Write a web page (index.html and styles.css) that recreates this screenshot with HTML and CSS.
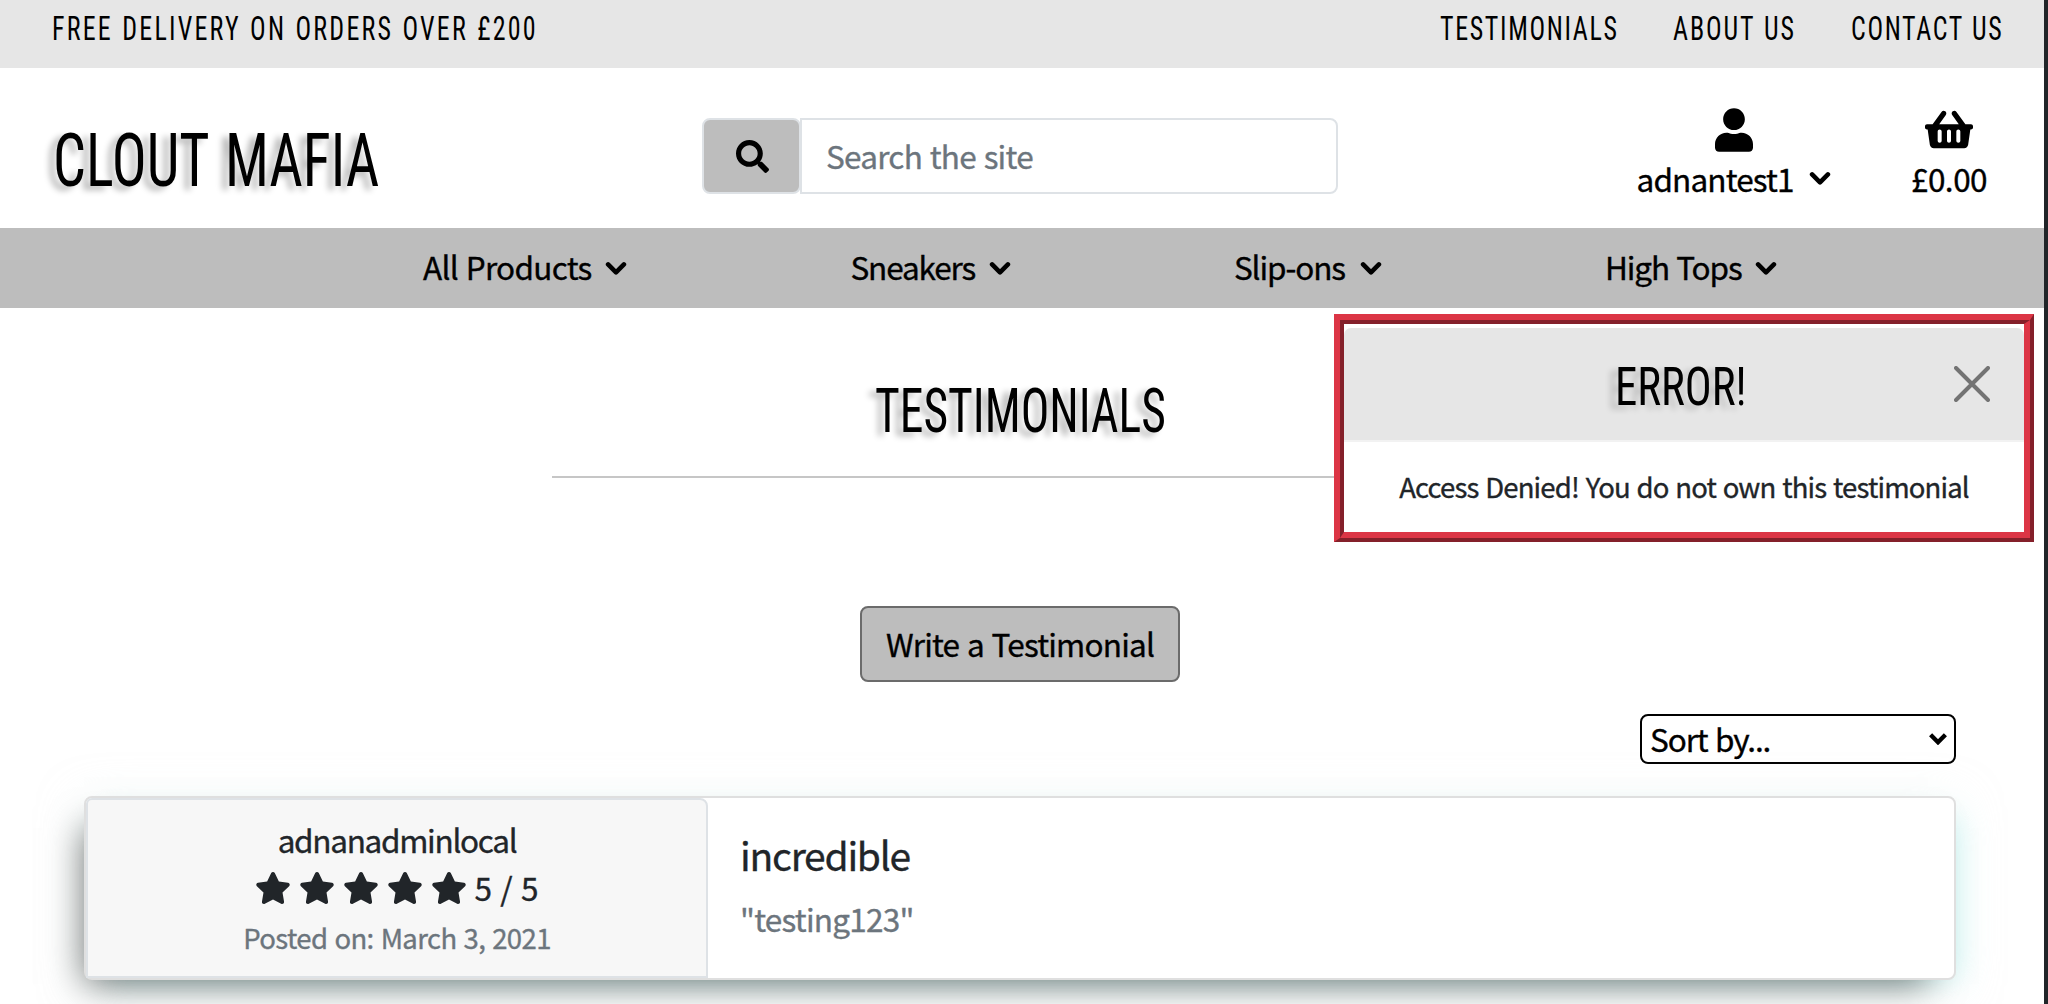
FILE: index.html
```html
<!DOCTYPE html>
<html lang="en">
<head>
<meta charset="utf-8">
<title>Clout Mafia - Testimonials</title>
<link rel="stylesheet" href="styles.css">
</head>
<body>
<svg class="defs" width="0" height="0">
  <symbol id="chevron" viewBox="0 0 22 25"><path d="M3.1 8.4l7.9 7.9 7.9-7.9" fill="none" stroke="currentColor" stroke-width="4.6" stroke-linecap="round" stroke-linejoin="round"/></symbol>
  <symbol id="star" viewBox="0 0 576 512"><path d="M259.3 17.8L194 150.2 47.9 171.5c-26.2 3.8-36.7 36.1-17.7 54.6l105.7 103-25 145.5c-4.5 26.3 23.2 46 46.4 33.7L288 439.6l130.7 68.7c23.2 12.2 50.9-7.4 46.4-33.7l-25-145.5 105.7-103c19-18.5 8.5-50.8-17.7-54.6L382 150.2 316.7 17.8c-11.7-23.6-45.6-23.9-57.4 0z"/></symbol>
</svg>
<div class="page">
  <div class="topbar">
    <div><span class="cond promo">FREE DELIVERY ON ORDERS OVER £200</span></div>
    <a><span class="cond">TESTIMONIALS</span></a>
    <a><span class="cond about">ABOUT US</span></a>
    <a><span class="cond">CONTACT US</span></a>
  </div>
  <header class="header">
    <div class="brand"><span class="cond">CLOUT MAFIA</span></div>
    <form class="search">
      <button class="search-btn" type="button" aria-label="Search"><svg viewBox="0 0 512 512"><path d="M505 442.7L405.3 343c-4.5-4.5-10.6-7-17-7H372c27.6-35.3 44-79.7 44-128C416 93.1 322.9 0 208 0S0 93.1 0 208s93.1 208 208 208c48.3 0 92.7-16.4 128-44v16.3c0 6.4 2.5 12.5 7 17l99.7 99.7c9.4 9.4 24.6 9.4 33.9 0l28.3-28.3c9.4-9.4 9.4-24.6.1-34zM208 336c-70.7 0-128-57.2-128-128 0-70.7 57.2-128 128-128 70.7 0 128 57.2 128 128 0 70.7-57.2 128-128 128z"/></svg></button>
      <input class="search-input" type="text" placeholder="Search the site">
    </form>
    <a class="account">
      <svg class="user-icon" viewBox="0 0 448 512"><path d="M224 256c70.7 0 128-57.3 128-128S294.7 0 224 0 96 57.3 96 128s57.3 128 128 128zm89.6 32h-16.7c-22.2 10.2-46.9 16-72.9 16s-50.6-5.8-72.9-16h-16.7C60.2 288 0 348.2 0 422.4V464c0 26.5 21.5 48 48 48h352c26.5 0 48-21.5 48-48v-41.6c0-74.2-60.2-134.4-134.4-134.4z"/></svg>
      <span class="account-name">adnantest1<svg class="chevron"><use href="#chevron"/></svg></span>
    </a>
    <a class="basket">
      <svg class="basket-icon" viewBox="0 0 576 512"><path d="M576 216v16c0 13.255-10.745 24-24 24h-8l-26.113 182.788C514.509 462.435 494.257 480 470.37 480H105.63c-23.887 0-44.139-17.565-47.518-41.212L32 256h-8c-13.255 0-24-10.745-24-24v-16c0-13.255 10.745-24 24-24h67.341l106.78-146.821c10.395-14.292 30.407-17.453 44.701-7.058 14.293 10.395 17.453 30.408 7.058 44.701L170.477 192h235.046L326.12 82.821c-10.395-14.292-7.234-34.306 7.059-44.701 14.291-10.395 34.306-7.235 44.701 7.058L484.659 192H552c13.255 0 24 10.745 24 24zM312 392V280c0-13.255-10.745-24-24-24s-24 10.745-24 24v112c0 13.255 10.745 24 24 24s24-10.745 24-24zm112 0V280c0-13.255-10.745-24-24-24s-24 10.745-24 24v112c0 13.255 10.745 24 24 24s24-10.745 24-24zm-224 0V280c0-13.255-10.745-24-24-24s-24 10.745-24 24v112c0 13.255 10.745 24 24 24s24-10.745 24-24z"/></svg>
      <span>£0.00</span>
    </a>
  </header>
  <nav class="nav">
    <a class="n1"><span>All Products</span><svg class="chevron"><use href="#chevron"/></svg></a>
    <a class="n2"><span>Sneakers</span><svg class="chevron"><use href="#chevron"/></svg></a>
    <a class="n3"><span>Slip-ons</span><svg class="chevron"><use href="#chevron"/></svg></a>
    <a class="n4"><span>High Tops</span><svg class="chevron"><use href="#chevron"/></svg></a>
  </nav>
  <main class="main">
    <h2 class="title"><span class="cond">TESTIMONIALS</span></h2>
    <hr class="rule">
    <a class="write">Write a Testimonial</a>
    <div class="sort"><span>Sort by...</span><svg viewBox="0 0 18 12"><path d="M1.6 1.8L9 9.2l7.4-7.4"/></svg></div>
    <article class="card">
      <div class="author">
        <div class="name">adnanadminlocal</div>
        <div class="stars">
          <svg><use href="#star"/></svg><svg><use href="#star"/></svg><svg><use href="#star"/></svg><svg><use href="#star"/></svg><svg><use href="#star"/></svg>
          <span>5 / 5</span>
        </div>
        <div class="date">Posted on: March 3, 2021</div>
      </div>
      <div class="review">
        <h4>incredible</h4>
        <p>"testing123"</p>
      </div>
    </article>
  </main>
  <div class="toast">
    <div class="toast-inner">
      <div class="toast-head">
        <span class="cond">ERROR!</span>
        <svg class="close" viewBox="0 0 36 36"><path d="M2 2l32 32M34 2L2 34"/></svg>
      </div>
      <div class="toast-body">Access Denied! You do not own this testimonial</div>
    </div>
  </div>
</div>
</body>
</html>
```
FILE: styles.css
```css
* { box-sizing: border-box; }
html { background: #212529; }
body {
  margin: 0;
  background: #212529;
  color: #212529;
  font: 31.5px/48px "Noto Sans CJK JP", "Noto Sans", sans-serif;
  letter-spacing: -0.75px;
  word-spacing: 1.4px;
  -webkit-text-stroke: 0.35px;
  overflow: hidden;
}
svg { display: block; flex: none; fill: currentColor; }
.defs { position: absolute; }
.page {
  position: relative;
  width: 2044px;
  height: 1004px;
  overflow: hidden;
  background: #fff;
}
.topbar, .brand, .title, .toast-head { font-family: Roboto, sans-serif; }
.cond {
  display: inline-block;
  font-stretch: 75%;
  white-space: nowrap;
  color: #000;
  transform: scaleX(.8);
  transform-origin: left;
  -webkit-text-stroke: 0;
}

.topbar {
  display: grid;
  grid-template-columns: 1388px 233px 178px 1fr;
  height: 68px;
  padding-left: 52px;
  background: #e6e6e6;
  font-size: 32.5px;
  line-height: 58px;
}
.topbar .cond { letter-spacing: 2.05px; }
.topbar .about { letter-spacing: 2.4px; }
.topbar .promo { letter-spacing: 2.75px; }

.header {
  display: grid;
  grid-template-columns: 649px 636px 299px 193px 81px 76px;
  align-items: start;
  height: 160px;
  padding-left: 53px;
  color: #000;
}
.brand {
  padding-top: 26px;
  font-size: 75px;
  line-height: 133px;
}
.brand .cond {
  letter-spacing: 0;
  word-spacing: 4px;
  transform: scaleX(.775);
  text-shadow: -9px 4px 7px rgba(0, 0, 0, .28);
}
.search {
  display: flex;
  height: 76px;
  margin-top: 50px;
}
.search-btn {
  display: grid;
  place-items: center;
  width: 99px;
  padding: 0 0 0 2px;
  border: 2px solid #dee2e6;
  border-radius: 8px;
  background: #bdbdbd;
  color: #000;
}
.search-btn svg { width: 33px; height: 33px; }
.search-input {
  flex: 1;
  margin: 0 0 0 -1px;
  padding: 0 24px 3px 24px;
  border: 2px solid #dee2e6;
  border-radius: 0 8px 8px 0;
  font: inherit;
  letter-spacing: -0.75px;
  word-spacing: 1.4px;
}
.search-input::placeholder { color: #6c757d; opacity: 1; }
.account, .basket {
  display: flex;
  flex-direction: column;
  align-items: center;
  padding-top: 40px;
}
.account { grid-column: 4; letter-spacing: -0.85px; }
.basket { grid-column: 6; letter-spacing: -0.5px; }
.user-icon { width: 38px; height: 44px; margin-bottom: 2px; }
.basket-icon { width: 48px; height: 43px; margin-bottom: 3px; }
.chevron { width: 22px; height: 25px; }
.account-name {
  display: flex;
  justify-content: space-between;
  align-items: center;
  width: 194px;
}
.account-name .chevron { margin-top: 1px; }

.nav {
  display: grid;
  grid-template-columns: 427.5px 383.5px 371px 1fr;
  align-items: center;
  height: 80px;
  padding-left: 423px;
  background: #bdbdbd;
  color: #000;
  letter-spacing: -1.15px;
}
.nav a {
  display: flex;
  justify-content: space-between;
  align-items: center;
}
.nav span { margin: -2px 0 2px 0; }
.n1 { width: 204px; letter-spacing: -0.7px; }
.n2 { width: 160px; }
.n3 { width: 148px; }
.n4 { width: 172px; }

.main { display: flex; flex-direction: column; }
.title {
  height: 72px;
  margin: 67px 4px 1px 0;
  font-size: 61px;
  font-weight: 400;
  line-height: 72px;
  text-align: center;
}
.title .cond {
  letter-spacing: 0;
  transform: scaleX(.78);
  transform-origin: center;
  text-shadow: -9px 4px 7px rgba(0, 0, 0, .28);
}
.rule {
  width: 936px;
  height: 2px;
  margin: 28px 0 0 552px;
  border: 0;
  background: #c6c6c6;
}
.write {
  align-self: center;
  width: 320px;
  height: 76px;
  margin: 128px 4px 0 0;
  border: 2px solid #6b6b6b;
  border-radius: 8px;
  background: #bdbdbd;
  color: #000;
  line-height: 70px;
  letter-spacing: -0.8px;
  text-align: center;
}
.sort {
  display: flex;
  justify-content: space-between;
  width: 316px;
  height: 50px;
  margin: 32px 0 0 1640px;
  padding: 0 7px 0 8px;
  border: 2px solid #000;
  border-radius: 8px;
  color: #000;
  line-height: 45px;
  letter-spacing: -1.1px;
}
.sort svg {
  width: 18px;
  height: 12px;
  margin-top: 17px;
  fill: none;
  stroke: #000;
  stroke-width: 4.4;
}

.card {
  display: flex;
  width: 1872px;
  height: 184px;
  margin: 32px 0 0 84px;
  border: 2px solid #dfdfdf;
  border-radius: 8px;
  background: #fff;
  box-shadow:
    -14px 18px 34px -14px rgba(0, 0, 0, .54),
    14px 10px 26px -12px rgba(200, 250, 248, .75),
    0 8px 44px rgba(230, 245, 244, .5);
}
.author {
  width: 622px;
  padding-top: 15px;
  border: 2px solid #dee2e6;
  border-radius: 6px 8px 0 0;
  background: #f7f7f7;
  text-align: center;
}
.name { letter-spacing: -1.3px; }
.stars {
  display: flex;
  justify-content: center;
  align-items: center;
  gap: 7.8px;
  height: 48px;
}
.stars svg { width: 36px; height: 32px; margin-top: 1px; }
.stars span { letter-spacing: 0; }
.date {
  margin-top: 2px;
  font-size: 27.5px;
  letter-spacing: -0.6px;
  color: #6c757d;
}
.review { padding: 28px 32px; }
.review h4 {
  margin: 0;
  font-size: 39px;
  font-weight: 400;
  letter-spacing: -1.25px;
  line-height: 56px;
}
.review p {
  margin: 12px 0 0;
  letter-spacing: -0.75px;
  color: #6c757d;
}

/* Notification floats over the page content */
.toast {
  position: absolute;
  top: 314px;
  left: 1334px;
  width: 700px;
  height: 228px;
  border: 6px solid #dc3545;
  border-width: 6px 4px 4px 6px;
  border-color: #dc3545 #84202a #84202a #dc3545;
  background: #fff;
}
.toast-inner {
  height: 218px;
  padding-top: 4px;
  border: 4px solid #84202a;
  border-width: 4px 6px 6px 4px;
  border-color: #84202a #dc3545 #dc3545 #84202a;
}
.toast-head {
  display: flex;
  align-items: center;
  height: 114px;
  padding-left: 271px;
  border-bottom: 2px solid #f2f2f2;
  border-radius: 7px 7px 0 0;
  background: #e6e6e6;
  font-size: 54px;
}
.toast-head .cond {
  letter-spacing: 0;
  line-height: 72px;
  margin-top: 6px;
  transform: scaleX(.83);
  text-shadow: -9px 4px 7px rgba(0, 0, 0, .18);
}
.close {
  width: 36px;
  height: 36px;
  margin-left: auto;
  margin-right: 34px;
  fill: none;
  stroke: #737373;
  stroke-width: 4;
  stroke-linecap: round;
}
.toast-body {
  padding-top: 20px;
  font-size: 27.5px;
  letter-spacing: -0.85px;
  text-align: center;
}
```
